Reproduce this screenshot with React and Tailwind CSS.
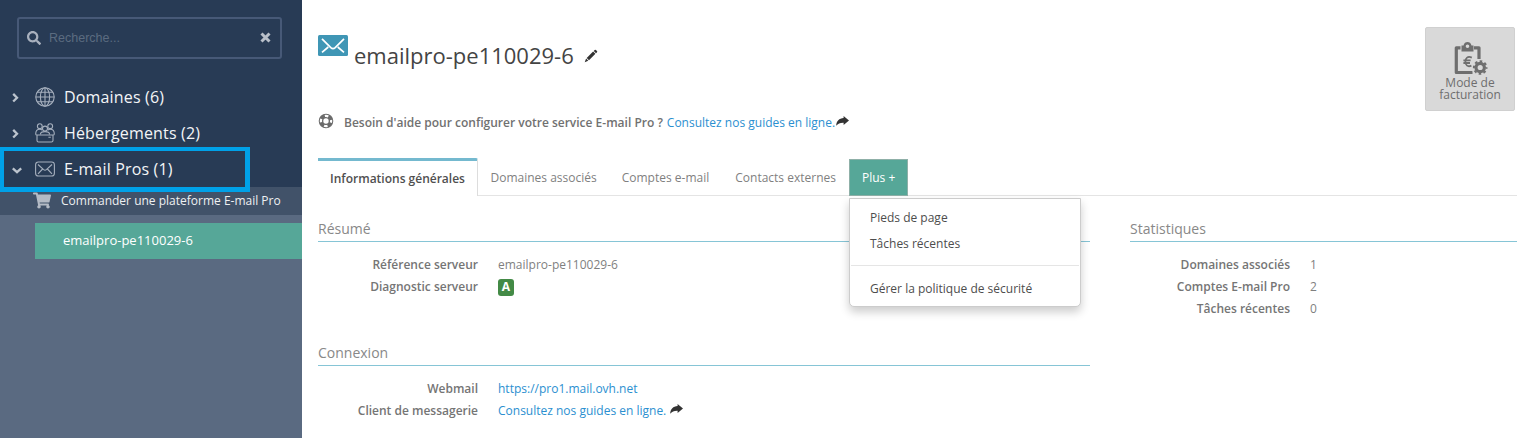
import React from "react";
import { FaSearch, FaShoppingCart } from "react-icons/fa";

function Chevron({ open }) {
  return (
    <svg viewBox="0 0 12 12" className="h-3 w-3 shrink-0" fill="none" stroke="#bcc4ce" strokeWidth="2.3">
      <path d={open ? "M2.8 5.3L7 9.1L11.2 5.3" : "M3.2 2.9L7 6.7L3.2 10.5"} />
    </svg>
  );
}

function GlobeIcon() {
  return (
    <svg viewBox="0 0 20 20" className="h-5 w-5" fill="none" stroke="#a5afbd" strokeWidth="1.1">
      <circle cx="10" cy="10" r="9.2" />
      <ellipse cx="10" cy="10" rx="4.6" ry="9.2" />
      <path d="M10 .8V19.2M.8 10H19.2M2.3 5.2H17.7M2.3 14.8H17.7" />
    </svg>
  );
}

function HostingIcon() {
  return (
    <svg viewBox="0 0 20 20" className="h-5 w-5" fill="none" stroke="#a5afbd" strokeWidth="1.1">
      <circle cx="4.8" cy="3.2" r="2.4" />
      <circle cx="15.2" cy="3.2" r="2.4" />
      <circle cx="10" cy="5.6" r="2.5" />
      <path d="M.7 10.9C.7 7.5 2.3 6.2 4.8 6.2C5.8 6.2 6.6 6.5 7.2 7M19.3 10.9C19.3 7.5 17.7 6.2 15.2 6.2C14.2 6.2 13.4 6.5 12.8 7M5.4 11.5C5.4 9.5 7.2 8.6 10 8.6S14.6 9.5 14.6 11.5" />
      <path d="M.7 10.9Q.7 12 2 12H18Q19.3 12 19.3 10.9M2 12V17.4Q2 19 3.6 19H16.4Q18 19 18 17.4V12M13.4 14.2H15.8" />
    </svg>
  );
}

function MailOutline() {
  return (
    <svg viewBox="0 0 20 16" className="h-4 w-5" fill="none" stroke="#a5afbd" strokeWidth="1.1">
      <rect x=".6" y="1" width="18.8" height="14" rx="2.8" />
      <path d="M3 3.5L8.6 8.6Q10 9.8 11.4 8.6L17 3.5M3 12.8L7.6 8M17 12.8L12.4 8" />
    </svg>
  );
}

function LifeRing() {
  return (
    <svg viewBox="0 0 16 16" className="h-4 w-4" fill="none">
      <circle cx="8" cy="8" r="5" stroke="#6b6b6b" strokeWidth="4.6" />
      <circle cx="8" cy="8" r="5.1" stroke="#fff" strokeWidth="2.2" strokeDasharray="3.6 4.41" strokeDashoffset="1.8" />
    </svg>
  );
}

function Pencil() {
  return (
    <svg viewBox="0 0 14 14" className="h-3.5 w-3.5" fill="#333">
      <path d="M10.7.9Q11.3.4 11.9.9L13 2Q13.5 2.6 13 3.2L12 4.2L9.7 1.9ZM9.1 2.5L11.4 4.8L5 11.2L2.7 8.9ZM2.1 9.6L4.3 11.8L.7 13.2Z" />
    </svg>
  );
}

function ShareArrow({ className }) {
  return (
    <svg viewBox="0 0 13 10" className={className} fill="#333">
      <path d="M7.6 0L13 4.5L7.6 9V6.7C4.2 6.6 2 7.4 .2 9.8C.4 5.2 3.2 2.3 7.6 2.1Z" />
    </svg>
  );
}

function BillingIcon() {
  return (
    <svg viewBox="0 0 36 36" className="h-9 w-9" fill="none">
      <path d="M8.5 6.8H4.3V31.5H20.5M22 6.8H27V18" stroke="#6e6e6e" strokeWidth="3.2" strokeLinejoin="round" />
      <path d="M9.5 4.5H11.5C12 1.8 13.6.9 15.5.9S19 1.8 19.5 4.5H21.5V10.5H9.5ZM15.5 3.4A1.8 1.8 0 1 0 15.5 7A1.8 1.8 0 1 0 15.5 3.4Z" fill="#6e6e6e" fillRule="evenodd" />
      <path d="M19.8 16.6C15.6 14.8 13.4 17.2 13.4 20.6C13.4 24.2 15.8 26.4 19.4 24.6M11.4 19.3H18.6M11.4 22H18" stroke="#6e6e6e" strokeWidth="1.8" />
      <circle cx="28.2" cy="26.5" r="8.4" fill="#d9d9d9" />
      <circle cx="28.2" cy="26.5" r="4.2" stroke="#6e6e6e" strokeWidth="3.2" />
      <circle cx="28.2" cy="26.5" r="6.3" stroke="#6e6e6e" strokeWidth="2" strokeDasharray="2.6 2.348" strokeDashoffset="1.3" />
    </svg>
  );
}

function NavRow({ icon, label, open }) {
  return (
    <div className="flex h-9 items-center pl-2.5">
      <Chevron open={open} />
      <span className="ml-[13px] flex w-[29px] items-center">{icon}</span>
      <span className="text-base tracking-[0.17px] text-[#f3f5f7]">{label}</span>
    </div>
  );
}

function Heading({ children }) {
  return <h2 className="h-[25px] border-b border-b-[#86c5d6] text-sm leading-[24px] text-[#888]">{children}</h2>;
}

function Row({ label, children }) {
  return (
    <div className="flex h-[22px] items-center">
      <span className="w-40 text-right font-semibold text-[#757575]">{label}</span>
      <span className="ml-5 flex items-center">{children}</span>
    </div>
  );
}

export default function App() {
  return (
    <div className="flex h-[438px] w-[1527px] overflow-hidden bg-white font-['Open_Sans',sans-serif] text-xs whitespace-nowrap text-[#7f7f7f]">
      <aside className="relative flex w-[302px] shrink-0 flex-col bg-[#5a6a81]">
        <div className="h-[187px] bg-[#283b55] pt-[17px]">
          <div className="ml-[17px] flex h-[42px] w-[265px] items-center rounded-[3px] border-2 border-[#475977] pr-[9px] pl-2">
            <FaSearch className="mb-px h-[14px] w-[14px] text-[#a9b1be]" />
            <span className="ml-[8px] flex-1 font-['Liberation_Sans',sans-serif] text-[12.5px] text-[#5b6b80]">Recherche...</span>
            <svg viewBox="0 0 11 11" className="mb-0.5 h-[11px] w-[11px]" stroke="#b9c0ca" strokeWidth="3">
              <path d="M1.5 1.5L9.5 9.5M9.5 1.5L1.5 9.5" />
            </svg>
          </div>
          <nav className="pt-5">
            <NavRow icon={<GlobeIcon />} label="Domaines (6)" />
            <NavRow icon={<HostingIcon />} label="Hébergements (2)" />
            <NavRow icon={<MailOutline />} label="E-mail Pros (1)" open />
          </nav>
        </div>
        <div className="flex h-[28px] items-center bg-[#415269] pl-[33px] text-[#eef0f2]">
          <FaShoppingCart className="mb-0.5 h-[17px] w-[18px] text-[#b4bbc5]" />
          <span className="ml-[10px]">Commander une plateforme E-mail Pro</span>
        </div>
        <div className="mt-2 ml-[35px] flex h-9 items-center bg-[#56a798] pl-7 text-[13px] text-white">emailpro-pe110029-6</div>
        <div className="absolute top-[147px] left-0 h-[45px] w-[250px] border-4 border-r-5 border-b-5 border-[#00a1e8]" />
      </aside>

      <main className="min-w-0 flex-1 pr-[10px] pl-4">
        <header className="flex h-[111px] justify-between">
          <div className="flex">
            <svg viewBox="0 0 30 21" className="mt-[35px] h-[21px] w-[30px]" fill="none">
              <rect width="30" height="21" rx="1.5" fill="#3f96b5" />
              <path d="M4 3.8L12.8 12.6Q15 14.6 17.2 12.6L26 3.8M4 17.3L10.3 12M26 17.3L19.7 12" stroke="#fff" strokeWidth="1.7" />
            </svg>
            <h1 className="mt-10 ml-1.5 text-[22px] leading-[30px] text-[#444]">emailpro-pe110029-6</h1>
            <span className="mt-[49px] ml-2.5"><Pencil /></span>
          </div>
          <button className="mt-[27px] mr-0.5 flex h-[84px] w-[90px] shrink-0 flex-col items-center rounded-[2px] border border-[#d0d0d0] bg-[#d9d9d9] pt-[13px] leading-3 text-[#6e6e6e]">
            <BillingIcon />
            <span>Mode de</span>
            <span>facturation</span>
          </button>
        </header>

        <div className="flex h-6 items-center">
          <span className="mb-1"><LifeRing /></span>
          <span className="ml-2.5 font-semibold text-[#717171]">Besoin d'aide pour configurer votre service E-mail Pro ?</span>
          <a className="ml-1 text-[#2b8fd0]">Consultez nos guides en ligne.</a>
          <ShareArrow className="mb-1 ml-px h-[10px] w-[13px]" />
        </div>

        <div className="relative mt-[23px] flex h-[38px] border-b border-[#e4e4e4]">
          <div className="mb-[-1px] flex w-40 items-center justify-center rounded-tr-[2px] border-t-[3px] border-r border-t-[#74b9cf] border-r-[#ddd] bg-white font-semibold text-[#4f4f4f]">Informations générales</div>
          <div className="pt-[11px] pl-[12.5px] leading-[18px]">Domaines associés</div>
          <div className="pt-[11px] pl-[25px] leading-[18px]">Comptes e-mail</div>
          <div className="pt-[11px] pl-[26px] leading-[18px]">Contacts externes</div>
          <div className="mt-px ml-[13px] h-[37px] w-[59px] border border-[#8fb0a8] bg-[#56a798] pt-[9px] pl-3 leading-[18px] text-white">Plus +</div>
          <div className="absolute top-10 left-[531px] z-10 h-[109px] w-[232px] rounded-b-[5px] border border-[#ccc] bg-white pt-1.5 text-[#4d4d4d] shadow-[0_5px_10px_rgba(0,0,0,0.2)]">
            <div className="flex h-[26px] items-center pl-5">Pieds de page</div>
            <div className="flex h-[26px] items-center pl-5">Tâches récentes</div>
            <div className="mx-px mt-2 border-t border-[#e5e5e5]" />
            <div className="mt-[10px] flex h-[26px] items-center pl-5">Gérer la politique de sécurité</div>
          </div>
        </div>

        <div className="flex pt-[21px]">
          <div className="w-[772px]">
            <Heading>Résumé</Heading>
            <div className="pt-3">
              <Row label="Référence serveur">emailpro-pe110029-6</Row>
              <Row label="Diagnostic serveur">
                <span className="flex h-[17px] w-4 items-center justify-center rounded-[3px] bg-[#438a46] font-bold text-white">A</span>
              </Row>
            </div>
            <div className="pt-[43px]">
              <Heading>Connexion</Heading>
            </div>
            <div className="pt-3">
              <Row label="Webmail"><a className="text-[#2b8fd0]">https://pro1.mail.ovh.net</a></Row>
              <Row label="Client de messagerie">
                <a className="text-[#2b8fd0]">Consultez nos guides en ligne.</a>
                <ShareArrow className="mb-1 ml-1 h-[10px] w-[13px]" />
              </Row>
            </div>
          </div>
          <div className="ml-10 w-[387px]">
            <Heading>Statistiques</Heading>
            <div className="pt-3">
              <Row label="Domaines associés">1</Row>
              <Row label="Comptes E-mail Pro">2</Row>
              <Row label="Tâches récentes">0</Row>
            </div>
          </div>
        </div>
      </main>
    </div>
  );
}
